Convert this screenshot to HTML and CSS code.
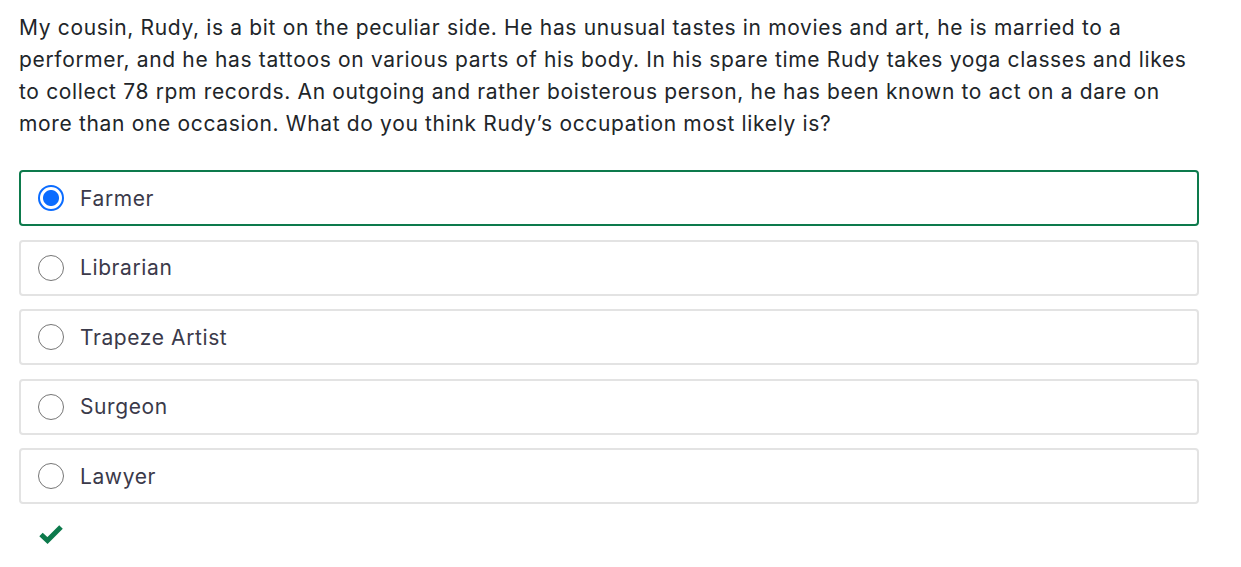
FILE: index.html
```html
<!DOCTYPE html>
<html>
<head>
<meta charset="utf-8">
<link rel="stylesheet" href="styles.css">
</head>
<body>
<div class="quiz">
  <p class="question">My cousin, Rudy, is a bit on the peculiar side. He has unusual tastes in movies and art, he is married to a performer, and he has tattoos on various parts of his body. In his spare time Rudy takes yoga classes and likes to collect 78 rpm records. An outgoing and rather boisterous person, he has been known to act on a dare on more than one occasion. What do you think Rudy’s occupation most likely is?</p>
  <div class="options">
    <label class="option selected"><span class="radio checked"></span><span class="label">Farmer</span></label>
    <label class="option"><span class="radio"></span><span class="label">Librarian</span></label>
    <label class="option"><span class="radio"></span><span class="label">Trapeze Artist</span></label>
    <label class="option"><span class="radio"></span><span class="label">Surgeon</span></label>
    <label class="option"><span class="radio"></span><span class="label">Lawyer</span></label>
  </div>
  <div class="result">
    <svg width="24" height="20" viewBox="0 0 24 20"><path d="M2 10.5 L8.5 16.5 L22 3" fill="none" stroke="#0d7a4c" stroke-width="5" stroke-linecap="butt" stroke-linejoin="miter"/></svg>
  </div>
</div>
</body>
</html>
```

FILE: styles.css
```css
html, body {
  margin: 0;
  padding: 0;
  background: #fff;
}
body {
  font-family: Inter, "Noto Sans", sans-serif;
  color: #212529;
}
.quiz {
  width: 1180px;
  padding: 12px 0 0 19px;
}
.question {
  margin: 0 0 30px 0;
  font-size: 21px;
  line-height: 32px;
  letter-spacing: 0.66px;
}
.options {
  display: flex;
  flex-direction: column;
  gap: 13.5px;
}
.option {
  display: flex;
  align-items: center;
  height: 56px;
  box-sizing: border-box;
  border: 2px solid #e3e3e3;
  border-radius: 4px;
  padding-left: 17px;
}
.option.selected {
  border-color: #0d7a4c;
}
.radio {
  width: 26px;
  height: 26px;
  box-sizing: border-box;
  border: 1.5px solid #767676;
  border-radius: 50%;
  margin-right: 16px;
  flex: none;
}
.radio.checked {
  border: 2px solid #0b6cff;
  background: radial-gradient(circle, #0b6cff 0 7.5px, #fff 8.5px);
}
.label {
  font-size: 21px;
  letter-spacing: 0.6px;
  color: #3b3a4a;
}
.result {
  padding: 20px 0 0 20px;
}
.result svg {
  display: block;
}
```
